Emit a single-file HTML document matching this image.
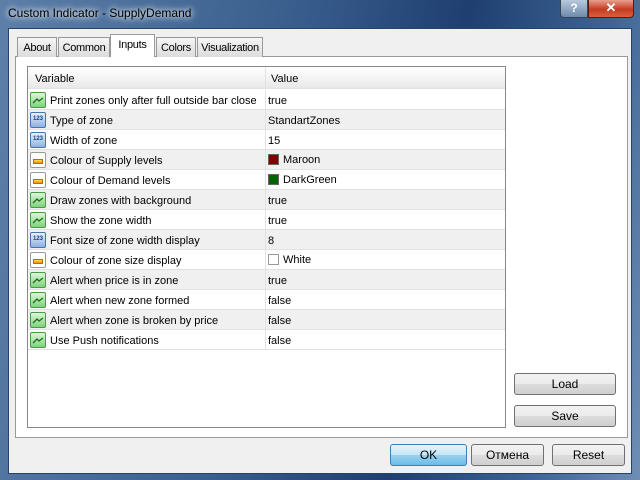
<!DOCTYPE html>
<html><head><style>
*{margin:0;padding:0;box-sizing:border-box}
body{width:640px;height:480px;overflow:hidden;font-family:"Liberation Sans",sans-serif;font-size:11px;color:#000;position:relative;
background:linear-gradient(100deg,#5d7fa8 0%,#3a5f8e 40%,#1e3f70 65%,#3d6494 85%,#6f8eb4 100%)}
.abs{position:absolute}
.title{left:8px;top:6px;font-size:12px;color:#000;text-shadow:0 0 6px #fff,0 0 8px #fff}
.client{left:8px;top:28px;width:624px;height:446px;background:#f0f0f0;border:1px solid #24436e}
.tab{top:37px;height:20px;border:1px solid #999;border-bottom:none;background:linear-gradient(#f5f5f5,#dcdcdc);padding-top:4px;text-align:center;font-size:11px;letter-spacing:-0.3px}
.panel{left:15px;top:56px;width:613px;height:382px;background:#fff;border:1px solid #999}
.list{left:27px;top:66px;width:479px;height:362px;border:1px solid #888;background:#fff}
.hdr{position:absolute;left:0;top:0;width:477px;height:22px;background:linear-gradient(#fff,#f2f2f2 60%,#e8e8e8);border-bottom:1px solid #e2e2e2}
.row{position:absolute;left:0;width:477px;height:20px;border-bottom:1px solid #e2e2e2}
.row .n{position:absolute;left:22px;top:5px}
.row .v{position:absolute;left:240px;top:5px}
.row .d{position:absolute;left:237px;top:0;width:1px;height:20px;background:#e2e2e2}
.ic{position:absolute;left:2px;top:2px;width:16px;height:16px;border-radius:2px}
.g{background:linear-gradient(#dff5dc,#7fd27a);border:1px solid #4a9a48}
.b{background:linear-gradient(#e8f0fb,#8fb2e0);border:1px solid #4a74b0;font-size:6px;color:#1a3c80;text-align:center;line-height:13px;font-weight:bold}
.o{background:#fff;border:1px solid #999}
.o i{position:absolute;left:2px;top:6px;width:10px;height:5px;background:linear-gradient(#ffe04a,#f08a10);border:1px solid #c06a00}
.sw{display:inline-block;width:11px;height:11px;border:1px solid #666;vertical-align:-2px;margin-right:4px}
.btn{height:22px;border:1px solid #707070;border-radius:3px;background:linear-gradient(#f2f2f2 0%,#ebebeb 50%,#dddddd 51%,#cfcfcf 100%);text-align:center;line-height:20px;font-size:12px}
</style></head><body>
<svg width="0" height="0" style="position:absolute"><symbol id="gl" viewBox="0 0 14 14"><polyline points="2,10 6,6 8,8 12,5" fill="none" stroke="#1d6a1b" stroke-width="1.3"/></symbol></svg>
<div class="abs title">Custom Indicator - SupplyDemand</div>
<div class="abs" style="left:560px;top:0;width:28px;height:18px;border:1px solid #345;border-top:none;border-radius:0 0 0 4px;background:linear-gradient(#b8c8dc,#6f8aab);color:#fff;font-weight:bold;text-align:center;font-size:12px;line-height:16px">?</div>
<div class="abs" style="left:588px;top:0;width:46px;height:18px;border:1px solid #5a1a10;border-top:none;border-radius:0 0 4px 0;background:linear-gradient(#e8a090,#c43a20 55%,#d86040);color:#fff;font-weight:bold;text-align:center;font-size:13px;line-height:16px">✕</div>
<div class="abs client"></div>
<div class="abs panel"></div>
<div class="abs tab" style="left:17px;width:40px">About</div>
<div class="abs tab" style="left:58px;width:52px">Common</div>
<div class="abs tab" style="left:110px;top:34px;height:23px;width:45px;background:#fff;padding-top:4px">Inputs</div>
<div class="abs tab" style="left:156px;width:40px">Colors</div>
<div class="abs tab" style="left:197px;width:66px">Visualization</div>
<div class="abs" style="left:111px;top:55px;width:43px;height:3px;background:#fff"></div>
<div class="abs list">
<div class="hdr"><span class="abs" style="left:7px;top:6px">Variable</span><span class="abs" style="left:237px;top:0;width:1px;height:22px;background:#e2e2e2"></span><span class="abs" style="left:243px;top:6px">Value</span></div>
<div class="row" style="top:23px;background:#fff"><div class="ic g"><svg width="14" height="14"><use href="#gl"/></svg></div><span class="n">Print zones only after full outside bar close</span><div class="d"></div><span class="v">true</span></div>
<div class="row" style="top:43px;background:#f0f0f0"><div class="ic b">123</div><span class="n">Type of zone</span><div class="d"></div><span class="v">StandartZones</span></div>
<div class="row" style="top:63px;background:#fff"><div class="ic b">123</div><span class="n">Width of zone</span><div class="d"></div><span class="v">15</span></div>
<div class="row" style="top:83px;background:#f0f0f0"><div class="ic o"><i></i></div><span class="n">Colour of Supply levels</span><div class="d"></div><span class="v" style="top:4px"><span class="sw" style="background:#800000"></span>Maroon</span></div>
<div class="row" style="top:103px;background:#fff"><div class="ic o"><i></i></div><span class="n">Colour of Demand levels</span><div class="d"></div><span class="v" style="top:4px"><span class="sw" style="background:#006400"></span>DarkGreen</span></div>
<div class="row" style="top:123px;background:#f0f0f0"><div class="ic g"><svg width="14" height="14"><use href="#gl"/></svg></div><span class="n">Draw zones with background</span><div class="d"></div><span class="v">true</span></div>
<div class="row" style="top:143px;background:#fff"><div class="ic g"><svg width="14" height="14"><use href="#gl"/></svg></div><span class="n">Show the zone width</span><div class="d"></div><span class="v">true</span></div>
<div class="row" style="top:163px;background:#f0f0f0"><div class="ic b">123</div><span class="n">Font size of zone width display</span><div class="d"></div><span class="v">8</span></div>
<div class="row" style="top:183px;background:#fff"><div class="ic o"><i></i></div><span class="n">Colour of zone size display</span><div class="d"></div><span class="v" style="top:4px"><span class="sw" style="background:#fff;border-color:#999"></span>White</span></div>
<div class="row" style="top:203px;background:#f0f0f0"><div class="ic g"><svg width="14" height="14"><use href="#gl"/></svg></div><span class="n">Alert when price is in zone</span><div class="d"></div><span class="v">true</span></div>
<div class="row" style="top:223px;background:#fff"><div class="ic g"><svg width="14" height="14"><use href="#gl"/></svg></div><span class="n">Alert when new zone formed</span><div class="d"></div><span class="v">false</span></div>
<div class="row" style="top:243px;background:#f0f0f0"><div class="ic g"><svg width="14" height="14"><use href="#gl"/></svg></div><span class="n">Alert when zone is broken by price</span><div class="d"></div><span class="v">false</span></div>
<div class="row" style="top:263px;background:#fff"><div class="ic g"><svg width="14" height="14"><use href="#gl"/></svg></div><span class="n">Use Push notifications</span><div class="d"></div><span class="v">false</span></div>
</div>
<div class="abs btn" style="left:514px;top:373px;width:102px">Load</div>
<div class="abs btn" style="left:514px;top:405px;width:102px">Save</div>
<div class="abs btn" style="left:390px;top:444px;width:77px;border-color:#3c7fb1;background:linear-gradient(#e5f4fc,#c4e5f6 50%,#98d1ef 51%,#6cbde8)">OK</div>
<div class="abs btn" style="left:471px;top:444px;width:73px">Отмена</div>
<div class="abs btn" style="left:552px;top:444px;width:73px">Reset</div>
</body></html>
